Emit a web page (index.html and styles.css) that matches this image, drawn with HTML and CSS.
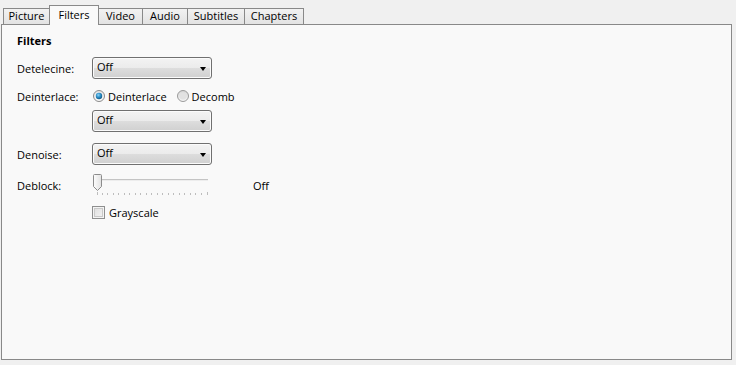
FILE: index.html
```html
<!DOCTYPE html>
<html lang="en">
  <head>
    <meta charset="UTF-8" />
    <title>Filters</title>
    <link rel="stylesheet" href="styles.css">
  </head>
  <body>
    <div class="tabs">
      <div class="tab tab-picture">Picture</div>
      <div class="tab tab-filters active">Filters</div>
      <div class="tab tab-video">Video</div>
      <div class="tab tab-audio">Audio</div>
      <div class="tab tab-subtitles">Subtitles</div>
      <div class="tab tab-chapters">Chapters</div>
    </div>
    <div class="panel">
      <h2 class="section-title">Filters</h2>

      <div class="row row-detelecine">
        <span class="label">Detelecine:</span>
        <div class="select"><span>Off</span><i class="arrow"></i></div>
      </div>

      <div class="row row-deinterlace">
        <span class="label">Deinterlace:</span>
        <label class="radio">
          <svg width="12" height="12" viewBox="0 0 12 12">
            <defs>
              <radialGradient id="rb" cx="0.4" cy="0.35" r="0.7">
                <stop offset="0" stop-color="#8fd3f5" />
                <stop offset="0.5" stop-color="#2c8fc8" />
                <stop offset="1" stop-color="#10547e" />
              </radialGradient>
              <linearGradient id="rf" x1="0" y1="0" x2="0" y2="1">
                <stop offset="0" stop-color="#e4e4e4" />
                <stop offset="1" stop-color="#fbfbfb" />
              </linearGradient>
            </defs>
            <circle cx="6" cy="6" r="5.5" fill="url(#rf)" stroke="#8a8a8a" />
            <circle cx="6" cy="6" r="3.2" fill="url(#rb)" />
          </svg>
          <span>Deinterlace</span>
        </label>
        <label class="radio radio-decomb">
          <svg width="12" height="12" viewBox="0 0 12 12">
            <defs>
              <linearGradient id="rf2" x1="0" y1="0" x2="0" y2="1">
                <stop offset="0" stop-color="#d6d6d6" />
                <stop offset="1" stop-color="#f6f6f6" />
              </linearGradient>
            </defs>
            <circle cx="6" cy="6" r="5.5" fill="url(#rf2)" stroke="#9a9a9a" />
            <circle cx="6" cy="6" r="3.5" fill="#e2e2e2" />
          </svg>
          <span>Decomb</span>
        </label>
      </div>

      <div class="row row-deinterlace-mode">
        <div class="select"><span>Off</span><i class="arrow"></i></div>
      </div>

      <div class="row row-denoise">
        <span class="label">Denoise:</span>
        <div class="select"><span>Off</span><i class="arrow"></i></div>
      </div>

      <div class="row row-deblock">
        <span class="label">Deblock:</span>
        <svg class="slider" width="120" height="24" viewBox="0 0 120 24">
          <defs>
            <linearGradient id="th" x1="0" y1="0" x2="1" y2="0">
              <stop offset="0" stop-color="#fdfdfd" />
              <stop offset="1" stop-color="#e2e2e2" />
            </linearGradient>
          </defs>
          <rect x="1" y="6" width="115" height="1" fill="#c4c4c4" />
          <rect x="1" y="7" width="115" height="1" fill="#ededed" />
          <g fill="#bdbdbd">
            <rect x="5" y="19" width="1" height="3" />
            <rect x="10" y="20" width="1" height="2" />
            <rect x="15" y="20" width="1" height="2" />
            <rect x="21" y="20" width="1" height="2" />
            <rect x="26" y="20" width="1" height="2" />
            <rect x="32" y="20" width="1" height="2" />
            <rect x="37" y="20" width="1" height="2" />
            <rect x="43" y="20" width="1" height="2" />
            <rect x="48" y="20" width="1" height="2" />
            <rect x="54" y="20" width="1" height="2" />
            <rect x="59" y="20" width="1" height="2" />
            <rect x="65" y="20" width="1" height="2" />
            <rect x="70" y="20" width="1" height="2" />
            <rect x="76" y="20" width="1" height="2" />
            <rect x="81" y="20" width="1" height="2" />
            <rect x="87" y="20" width="1" height="2" />
            <rect x="92" y="20" width="1" height="2" />
            <rect x="98" y="20" width="1" height="2" />
            <rect x="103" y="20" width="1" height="2" />
            <rect x="109" y="20" width="1" height="2" />
            <rect x="115" y="19" width="1" height="3" />
          </g>
          <path d="M1.5 2.5 Q1.5 1.5 2.5 1.5 L8.5 1.5 Q9.5 1.5 9.5 2.5 L9.5 13.5 L5.5 17.5 L1.5 13.5 Z" fill="url(#th)" stroke="#8c8c8c" />
        </svg>
        <span class="slider-value">Off</span>
      </div>

      <div class="row row-grayscale">
        <label class="checkbox">
          <i class="box"></i>
          <span>Grayscale</span>
        </label>
      </div>
    </div>
  </body>
</html>
```

FILE: styles.css
```css
body {
  margin: 0;
  background: #f0f0f0;
  font-family: "Open Sans", "Noto Sans", sans-serif;
  font-size: 11px;
  color: #000;
}
.tabs {
  display: flex;
  align-items: flex-end;
  height: 24px;
  padding-left: 3px;
  position: relative;
  z-index: 1;
}
.tab {
  box-sizing: border-box;
  height: 16px;
  line-height: 14px;
  text-align: center;
  border: 1px solid #898989;
  border-bottom: none;
  border-right: none;
  background: linear-gradient(#f2f2f2, #e3e3e3);
}
.tab-chapters {
  border-right: 1px solid #898989;
}
.tab.active {
  height: 20px;
  margin-bottom: -1px;
  line-height: 18px;
  background: #f9f9f9;
  border-right: 1px solid #898989;
}
.tab.active + .tab {
  border-left: none;
}
.tab-picture { width: 46px; }
.tab-filters { width: 50px; }
.tab-video { width: 43px; }
.tab-audio { width: 45px; }
.tab-subtitles { width: 57px; }
.tab-chapters { width: 60px; }

.panel {
  box-sizing: border-box;
  margin-left: 1px;
  width: 731px;
  height: 336px;
  border: 1px solid #898989;
  background: #f9f9f9;
  padding: 8px 0 0 15px;
}
.section-title {
  margin: 0;
  font-size: 11px;
  font-weight: bold;
  line-height: 16px;
}
.row {
  display: flex;
  align-items: center;
}
.label {
  width: 75px;
  flex: none;
}
.row-detelecine { margin-top: 8px; height: 22px; }
.row-deinterlace { margin-top: 9px; height: 16px; }
.row-deinterlace-mode { margin-top: 6px; height: 22px; padding-left: 75px; }
.row-denoise { margin-top: 11px; height: 22px; }
.row-deblock { margin-top: 8px; height: 24px; }
.row-grayscale { margin-top: 7px; height: 16px; padding-left: 75px; }

.select {
  box-sizing: border-box;
  position: relative;
  width: 120px;
  height: 22px;
  border: 1px solid #707070;
  border-radius: 3px;
  background: linear-gradient(#f3f3f3 0%, #ebebeb 50%, #dddddd 51%, #d0d0d0 100%);
  box-shadow: inset 0 0 0 1px #fbfbfb;
  padding-left: 4px;
  line-height: 18px;
}
.arrow {
  position: absolute;
  right: 5px;
  top: 9px;
  width: 0;
  height: 0;
  border-left: 3.5px solid transparent;
  border-right: 3.5px solid transparent;
  border-top: 4px solid #000;
}

.radio {
  display: flex;
  align-items: center;
}
.radio svg {
  margin-left: 1px;
  margin-right: 3px;
}
.radio-decomb {
  margin-left: 9px;
}

.slider {
  display: block;
}
.slider-value {
  margin-left: 41px;
}

.checkbox {
  display: flex;
  align-items: center;
}
.box {
  box-sizing: border-box;
  width: 13px;
  height: 13px;
  border: 1px solid #8e8f8f;
  background: linear-gradient(135deg, #dcdcdc, #f6f6f6);
  box-shadow: inset 0 0 0 1px #f4f4f4, inset 0 0 0 2px #c9c9c9;
  margin-right: 4px;
}
```
